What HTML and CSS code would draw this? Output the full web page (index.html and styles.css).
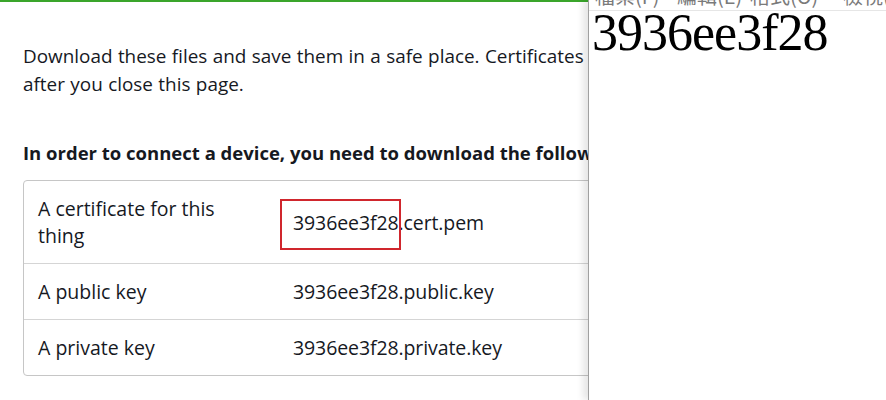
FILE: index.html
```html
<!DOCTYPE html>
<html>
<head>
<meta charset="utf-8">
<link rel="stylesheet" href="styles.css">
</head>
<body>
<div class="page">
  <div class="topline"></div>
  <div class="content">
    <p class="intro">Download these files and save them in a safe place. Certificates can be retrieved at any time, but the public and private keys cannot be retrieved<br>after you close this page.</p>
    <h2 class="heading">In order to connect a device, you need to download the following:</h2>
    <div class="table">
      <div class="row row-tall">
        <div class="c1">A certificate for this thing</div>
        <div class="c2"><span class="hl">3936ee3f28</span>.cert.pem</div>
      </div>
      <div class="row">
        <div class="c1">A public key</div>
        <div class="c2">3936ee3f28.public.key</div>
      </div>
      <div class="row">
        <div class="c1">A private key</div>
        <div class="c2">3936ee3f28.private.key</div>
      </div>
    </div>
  </div>
</div>
<div class="notepad">
  <div class="menubar">
    <div class="menu-inner">
      <span class="m1">檔案(F)</span><span class="m2">編輯(E)</span><span class="m3">格式(O)</span><span class="m4">檢視(V)</span>
    </div>
  </div>
  <div class="doc">3936ee3f28</div>
</div>
</body>
</html>
```
FILE: styles.css
```css
html, body { margin: 0; padding: 0; background: #fff; }
body { width: 886px; height: 400px; overflow: hidden; position: relative; font-family: "Open Sans", "Noto Sans", sans-serif; color: #16191f; }
.page { width: 886px; height: 400px; overflow: hidden; }
.topline { height: 2px; background: #3aa52b; }
.content { padding: 0 0 0 23px; }
.intro { margin: 40px 0 0; font-size: 18.9px; line-height: 28px; word-spacing: 0.5px; white-space: nowrap; }
.heading { margin: 42px 0 0; font-size: 18.5px; font-weight: 700; line-height: 26px; white-space: nowrap; }
.table { margin-top: 14px; border: 1px solid #c6c6c6; border-radius: 4px; width: 700px; }
.row { display: flex; align-items: center; height: 55px; border-top: 1px solid #d5d5d5; font-size: 19.5px; line-height: 27px; }
.row:first-child { border-top: none; }
.row-tall { height: 82px; }
.c1 { width: 200px; padding-left: 14px; }
.c2 { padding-left: 55px; letter-spacing: -0.1px; }
.hl { position: relative; }
.hl::after { content: ""; position: absolute; left: -13px; right: -2px; top: -10px; bottom: -14px; border: 2px solid #d0262d; }
.notepad { position: absolute; left: 588px; top: 0; width: 298px; height: 400px; background: #fff; border-left: 1px solid #a0a0a0; box-shadow: -5px 0 7px rgba(0,0,0,0.10); }
.menubar { height: 10px; overflow: hidden; border-bottom: 1px solid #e6e6e6; }
.menu-inner { margin-top: -15px; display: flex; font-family: "Noto Sans CJK TC", sans-serif; font-size: 20px; line-height: 22px; color: #7a7a7a; white-space: nowrap; padding-left: 6px; }
.menu-inner span { flex-shrink: 0; }
.m1 { width: 82px; }
.m2 { width: 73px; }
.m3 { width: 93px; }
.doc { font-family: "Liberation Serif", serif; font-size: 52px; line-height: 44px; letter-spacing: -1px; padding: 0 0 0 3px; color: #000; }
```
